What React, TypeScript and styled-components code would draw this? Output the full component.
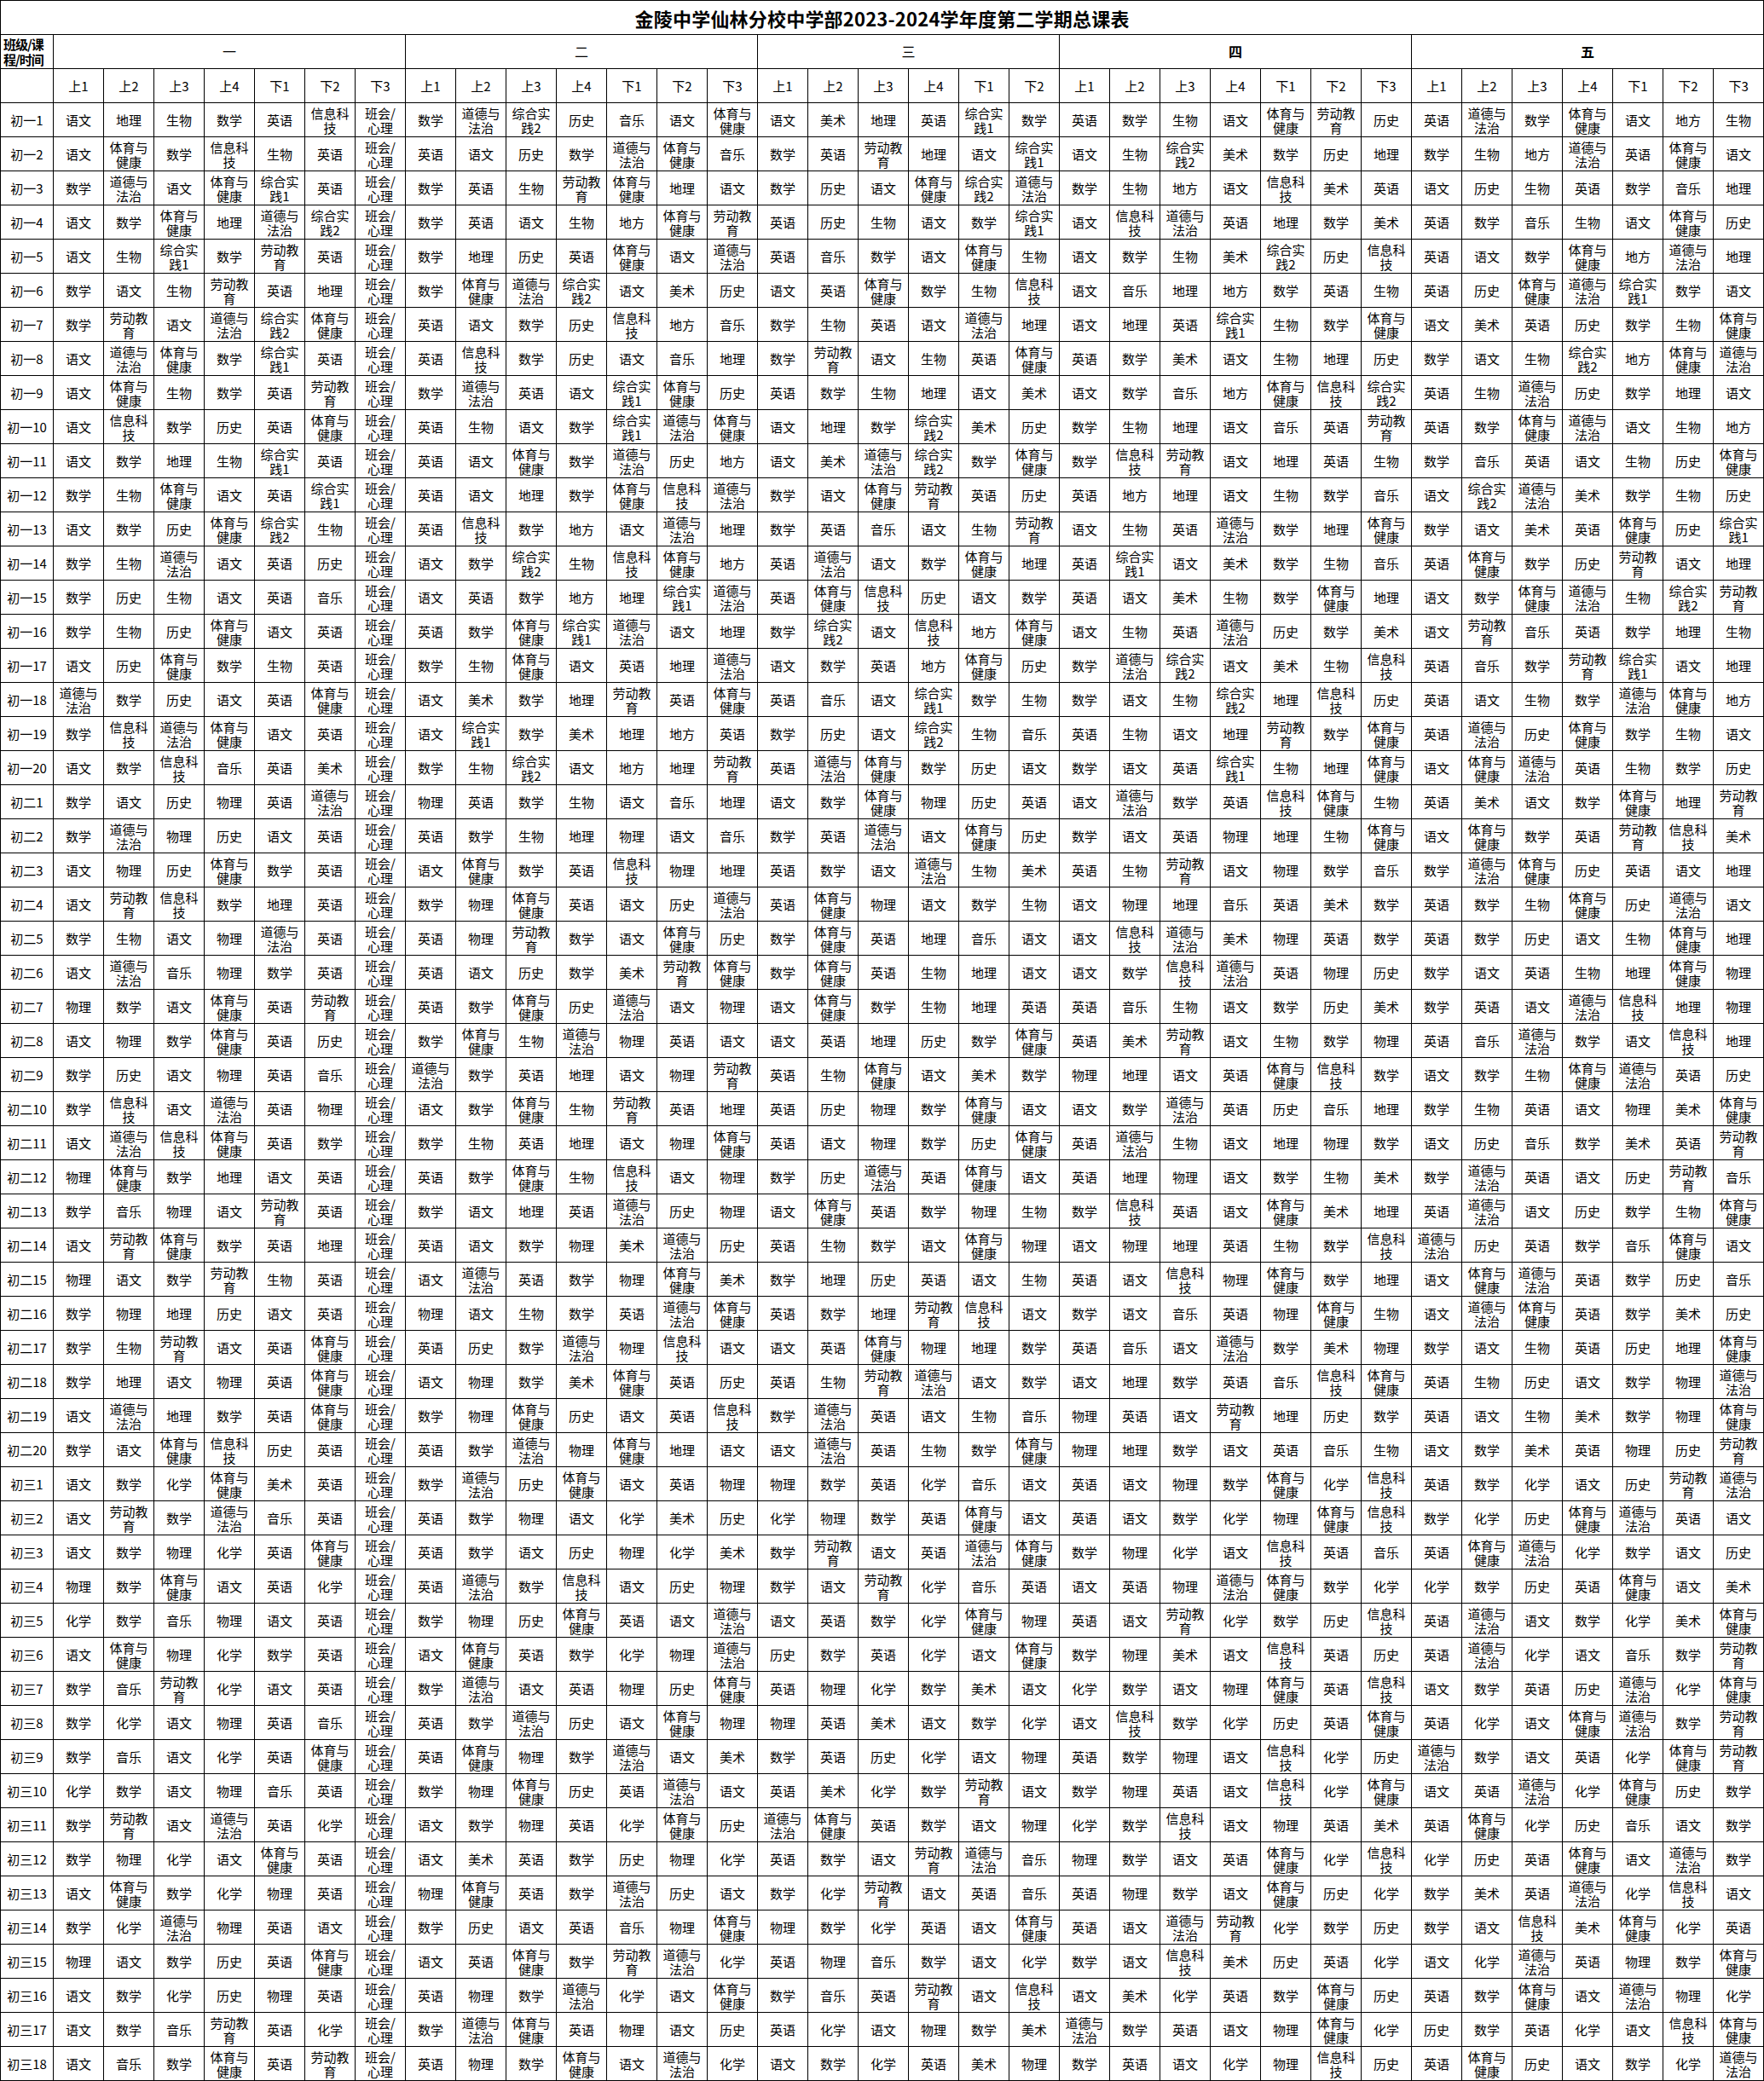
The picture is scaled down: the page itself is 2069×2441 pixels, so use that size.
import React from "react";
import styled, { createGlobalStyle } from "styled-components";

const GlobalStyle = createGlobalStyle`
  html, body {
    margin: 0;
    padding: 0;
    background: #fff;
  }
  body {
    font-family: "Noto Sans CJK SC", "Liberation Sans", sans-serif;
    color: #000;
  }
`;

const AM_PM = ["上1", "上2", "上3", "上4", "下1", "下2", "下3"];

const DAYS = [
  { name: "一", periods: AM_PM, bold: false },
  { name: "二", periods: AM_PM, bold: false },
  { name: "三", periods: AM_PM.slice(0, 6), bold: false },
  { name: "四", periods: AM_PM, bold: true },
  { name: "五", periods: AM_PM, bold: true },
];

// one line per class, day groups split by "|"
const ROWS: [string, string][] = [
  ["初一1", "语文 地理 生物 数学 英语 信息科技 班会/心理 | 数学 道德与法治 综合实践2 历史 音乐 语文 体育与健康 | 语文 美术 地理 英语 综合实践1 数学 | 英语 数学 生物 语文 体育与健康 劳动教育 历史 | 英语 道德与法治 数学 体育与健康 语文 地方 生物"],
  ["初一2", "语文 体育与健康 数学 信息科技 生物 英语 班会/心理 | 英语 语文 历史 数学 道德与法治 体育与健康 音乐 | 数学 英语 劳动教育 地理 语文 综合实践1 | 语文 生物 综合实践2 美术 数学 历史 地理 | 数学 生物 地方 道德与法治 英语 体育与健康 语文"],
  ["初一3", "数学 道德与法治 语文 体育与健康 综合实践1 英语 班会/心理 | 数学 英语 生物 劳动教育 体育与健康 地理 语文 | 数学 历史 语文 体育与健康 综合实践2 道德与法治 | 数学 生物 地方 语文 信息科技 美术 英语 | 语文 历史 生物 英语 数学 音乐 地理"],
  ["初一4", "语文 数学 体育与健康 地理 道德与法治 综合实践2 班会/心理 | 数学 英语 语文 生物 地方 体育与健康 劳动教育 | 英语 历史 生物 语文 数学 综合实践1 | 语文 信息科技 道德与法治 英语 地理 数学 美术 | 英语 数学 音乐 生物 语文 体育与健康 历史"],
  ["初一5", "语文 生物 综合实践1 数学 劳动教育 英语 班会/心理 | 数学 地理 历史 英语 体育与健康 语文 道德与法治 | 英语 音乐 数学 语文 体育与健康 生物 | 语文 数学 生物 美术 综合实践2 历史 信息科技 | 英语 语文 数学 体育与健康 地方 道德与法治 地理"],
  ["初一6", "数学 语文 生物 劳动教育 英语 地理 班会/心理 | 数学 体育与健康 道德与法治 综合实践2 语文 美术 历史 | 语文 英语 体育与健康 数学 生物 信息科技 | 语文 音乐 地理 地方 数学 英语 生物 | 英语 历史 体育与健康 道德与法治 综合实践1 数学 语文"],
  ["初一7", "数学 劳动教育 语文 道德与法治 综合实践2 体育与健康 班会/心理 | 英语 语文 数学 历史 信息科技 地方 音乐 | 数学 生物 英语 语文 道德与法治 地理 | 语文 地理 英语 综合实践1 生物 数学 体育与健康 | 语文 美术 英语 历史 数学 生物 体育与健康"],
  ["初一8", "语文 道德与法治 体育与健康 数学 综合实践1 英语 班会/心理 | 英语 信息科技 数学 历史 语文 音乐 地理 | 数学 劳动教育 语文 生物 英语 体育与健康 | 英语 数学 美术 语文 生物 地理 历史 | 数学 语文 生物 综合实践2 地方 体育与健康 道德与法治"],
  ["初一9", "语文 体育与健康 生物 数学 英语 劳动教育 班会/心理 | 数学 道德与法治 英语 语文 综合实践1 体育与健康 历史 | 英语 数学 生物 地理 语文 美术 | 语文 数学 音乐 地方 体育与健康 信息科技 综合实践2 | 英语 生物 道德与法治 历史 数学 地理 语文"],
  ["初一10", "语文 信息科技 数学 历史 英语 体育与健康 班会/心理 | 英语 生物 语文 数学 综合实践1 道德与法治 体育与健康 | 语文 地理 数学 综合实践2 美术 历史 | 数学 生物 地理 语文 音乐 英语 劳动教育 | 英语 数学 体育与健康 道德与法治 语文 生物 地方"],
  ["初一11", "语文 数学 地理 生物 综合实践1 英语 班会/心理 | 英语 语文 体育与健康 数学 道德与法治 历史 地方 | 语文 美术 道德与法治 综合实践2 数学 体育与健康 | 数学 信息科技 劳动教育 语文 地理 英语 生物 | 数学 音乐 英语 语文 生物 历史 体育与健康"],
  ["初一12", "数学 生物 体育与健康 语文 英语 综合实践1 班会/心理 | 英语 语文 地理 数学 体育与健康 信息科技 道德与法治 | 数学 语文 体育与健康 劳动教育 英语 历史 | 英语 地方 地理 语文 生物 数学 音乐 | 语文 综合实践2 道德与法治 美术 数学 生物 历史"],
  ["初一13", "语文 数学 历史 体育与健康 综合实践2 生物 班会/心理 | 英语 信息科技 数学 地方 语文 道德与法治 地理 | 数学 英语 音乐 语文 生物 劳动教育 | 语文 生物 英语 道德与法治 数学 地理 体育与健康 | 数学 语文 美术 英语 体育与健康 历史 综合实践1"],
  ["初一14", "数学 生物 道德与法治 语文 英语 历史 班会/心理 | 语文 数学 综合实践2 生物 信息科技 体育与健康 地方 | 英语 道德与法治 语文 数学 体育与健康 地理 | 英语 综合实践1 语文 美术 数学 生物 音乐 | 英语 体育与健康 数学 历史 劳动教育 语文 地理"],
  ["初一15", "数学 历史 生物 语文 英语 音乐 班会/心理 | 语文 英语 数学 地方 地理 综合实践1 道德与法治 | 英语 体育与健康 信息科技 历史 语文 数学 | 英语 语文 美术 生物 数学 体育与健康 地理 | 语文 数学 体育与健康 道德与法治 生物 综合实践2 劳动教育"],
  ["初一16", "数学 生物 历史 体育与健康 语文 英语 班会/心理 | 英语 数学 体育与健康 综合实践1 道德与法治 语文 地理 | 数学 综合实践2 语文 信息科技 地方 体育与健康 | 语文 生物 英语 道德与法治 历史 数学 美术 | 语文 劳动教育 音乐 英语 数学 地理 生物"],
  ["初一17", "语文 历史 体育与健康 数学 生物 英语 班会/心理 | 数学 生物 体育与健康 语文 英语 地理 道德与法治 | 语文 数学 英语 地方 体育与健康 历史 | 数学 道德与法治 综合实践2 语文 美术 生物 信息科技 | 英语 音乐 数学 劳动教育 综合实践1 语文 地理"],
  ["初一18", "道德与法治 数学 历史 语文 英语 体育与健康 班会/心理 | 语文 美术 数学 地理 劳动教育 英语 体育与健康 | 英语 音乐 语文 综合实践1 数学 生物 | 数学 语文 生物 综合实践2 地理 信息科技 历史 | 英语 语文 生物 数学 道德与法治 体育与健康 地方"],
  ["初一19", "数学 信息科技 道德与法治 体育与健康 语文 英语 班会/心理 | 语文 综合实践1 数学 美术 地理 地方 英语 | 数学 历史 语文 综合实践2 生物 音乐 | 英语 生物 语文 地理 劳动教育 数学 体育与健康 | 英语 道德与法治 历史 体育与健康 数学 生物 语文"],
  ["初一20", "语文 数学 信息科技 音乐 英语 美术 班会/心理 | 数学 生物 综合实践2 语文 地方 地理 劳动教育 | 英语 道德与法治 体育与健康 数学 历史 语文 | 数学 语文 英语 综合实践1 生物 地理 体育与健康 | 语文 体育与健康 道德与法治 英语 生物 数学 历史"],
  ["初二1", "数学 语文 历史 物理 英语 道德与法治 班会/心理 | 物理 英语 数学 生物 语文 音乐 地理 | 语文 数学 体育与健康 物理 历史 英语 | 语文 道德与法治 数学 英语 信息科技 体育与健康 生物 | 英语 美术 语文 数学 体育与健康 地理 劳动教育"],
  ["初二2", "数学 道德与法治 物理 历史 语文 英语 班会/心理 | 英语 数学 生物 地理 物理 语文 音乐 | 数学 英语 道德与法治 语文 体育与健康 历史 | 数学 语文 英语 物理 地理 生物 体育与健康 | 语文 体育与健康 数学 英语 劳动教育 信息科技 美术"],
  ["初二3", "语文 物理 历史 体育与健康 数学 英语 班会/心理 | 语文 体育与健康 数学 英语 信息科技 物理 地理 | 英语 数学 语文 道德与法治 生物 美术 | 英语 生物 劳动教育 语文 物理 数学 音乐 | 数学 道德与法治 体育与健康 历史 英语 语文 地理"],
  ["初二4", "语文 劳动教育 信息科技 数学 地理 英语 班会/心理 | 数学 物理 体育与健康 英语 语文 历史 道德与法治 | 英语 体育与健康 物理 语文 数学 生物 | 语文 物理 地理 音乐 英语 美术 数学 | 英语 数学 生物 体育与健康 历史 道德与法治 语文"],
  ["初二5", "数学 生物 语文 物理 道德与法治 英语 班会/心理 | 英语 物理 劳动教育 数学 语文 体育与健康 历史 | 数学 体育与健康 英语 地理 音乐 语文 | 语文 信息科技 道德与法治 美术 物理 英语 数学 | 英语 数学 历史 语文 生物 体育与健康 地理"],
  ["初二6", "语文 道德与法治 音乐 物理 数学 英语 班会/心理 | 英语 语文 历史 数学 美术 劳动教育 体育与健康 | 数学 体育与健康 英语 生物 地理 语文 | 语文 数学 信息科技 道德与法治 英语 物理 历史 | 数学 语文 英语 生物 地理 体育与健康 物理"],
  ["初二7", "物理 数学 语文 体育与健康 英语 劳动教育 班会/心理 | 英语 数学 体育与健康 历史 道德与法治 语文 物理 | 语文 体育与健康 数学 生物 地理 英语 | 英语 音乐 生物 语文 数学 历史 美术 | 数学 英语 语文 道德与法治 信息科技 地理 物理"],
  ["初二8", "语文 物理 数学 体育与健康 英语 历史 班会/心理 | 数学 体育与健康 生物 道德与法治 物理 英语 语文 | 语文 英语 地理 历史 数学 体育与健康 | 英语 美术 劳动教育 语文 生物 数学 物理 | 英语 音乐 道德与法治 数学 语文 信息科技 地理"],
  ["初二9", "数学 历史 语文 物理 英语 音乐 班会/心理 | 道德与法治 数学 英语 地理 语文 物理 劳动教育 | 英语 生物 体育与健康 语文 美术 数学 | 物理 地理 语文 英语 体育与健康 信息科技 数学 | 语文 数学 生物 体育与健康 道德与法治 英语 历史"],
  ["初二10", "数学 信息科技 语文 道德与法治 英语 物理 班会/心理 | 语文 数学 体育与健康 生物 劳动教育 英语 地理 | 英语 历史 物理 数学 体育与健康 语文 | 语文 数学 道德与法治 英语 历史 音乐 地理 | 数学 生物 英语 语文 物理 美术 体育与健康"],
  ["初二11", "语文 道德与法治 信息科技 体育与健康 英语 数学 班会/心理 | 数学 生物 英语 地理 语文 物理 体育与健康 | 英语 语文 物理 数学 历史 体育与健康 | 英语 道德与法治 生物 语文 地理 物理 数学 | 语文 历史 音乐 数学 美术 英语 劳动教育"],
  ["初二12", "物理 体育与健康 数学 地理 语文 英语 班会/心理 | 英语 数学 体育与健康 生物 信息科技 语文 物理 | 数学 历史 道德与法治 英语 体育与健康 语文 | 英语 地理 物理 语文 数学 生物 美术 | 数学 道德与法治 英语 语文 历史 劳动教育 音乐"],
  ["初二13", "数学 音乐 物理 语文 劳动教育 英语 班会/心理 | 数学 语文 地理 英语 道德与法治 历史 物理 | 语文 体育与健康 英语 数学 物理 生物 | 数学 信息科技 英语 语文 体育与健康 美术 地理 | 英语 道德与法治 语文 历史 数学 生物 体育与健康"],
  ["初二14", "语文 劳动教育 体育与健康 数学 英语 地理 班会/心理 | 英语 语文 数学 物理 美术 道德与法治 历史 | 英语 生物 数学 语文 体育与健康 物理 | 语文 物理 地理 英语 生物 数学 信息科技 | 道德与法治 历史 英语 数学 音乐 体育与健康 语文"],
  ["初二15", "物理 语文 数学 劳动教育 生物 英语 班会/心理 | 语文 道德与法治 英语 数学 物理 体育与健康 美术 | 数学 地理 历史 英语 语文 生物 | 英语 语文 信息科技 物理 体育与健康 数学 地理 | 语文 体育与健康 道德与法治 英语 数学 历史 音乐"],
  ["初二16", "数学 物理 地理 历史 语文 英语 班会/心理 | 物理 语文 生物 数学 英语 道德与法治 体育与健康 | 英语 数学 地理 劳动教育 信息科技 语文 | 数学 语文 音乐 英语 物理 体育与健康 生物 | 语文 道德与法治 体育与健康 英语 数学 美术 历史"],
  ["初二17", "数学 生物 劳动教育 语文 英语 体育与健康 班会/心理 | 英语 历史 数学 道德与法治 物理 信息科技 语文 | 语文 英语 体育与健康 物理 地理 数学 | 英语 音乐 语文 道德与法治 数学 美术 物理 | 数学 语文 生物 英语 历史 地理 体育与健康"],
  ["初二18", "数学 地理 语文 物理 英语 体育与健康 班会/心理 | 语文 物理 数学 美术 体育与健康 英语 历史 | 英语 生物 劳动教育 道德与法治 语文 数学 | 语文 地理 数学 英语 音乐 信息科技 体育与健康 | 英语 生物 历史 语文 数学 物理 道德与法治"],
  ["初二19", "语文 道德与法治 地理 数学 英语 体育与健康 班会/心理 | 数学 物理 体育与健康 历史 语文 英语 信息科技 | 数学 道德与法治 英语 语文 生物 音乐 | 物理 英语 语文 劳动教育 地理 历史 数学 | 英语 语文 生物 美术 数学 物理 体育与健康"],
  ["初二20", "数学 语文 体育与健康 信息科技 历史 英语 班会/心理 | 英语 数学 道德与法治 物理 体育与健康 地理 语文 | 语文 道德与法治 英语 生物 数学 体育与健康 | 物理 地理 数学 语文 英语 音乐 生物 | 语文 数学 美术 英语 物理 历史 劳动教育"],
  ["初三1", "语文 数学 化学 体育与健康 美术 英语 班会/心理 | 数学 道德与法治 历史 体育与健康 语文 英语 物理 | 物理 数学 英语 化学 音乐 语文 | 英语 语文 物理 数学 体育与健康 化学 信息科技 | 英语 数学 化学 语文 历史 劳动教育 道德与法治"],
  ["初三2", "语文 劳动教育 数学 道德与法治 音乐 英语 班会/心理 | 英语 数学 物理 语文 化学 美术 历史 | 化学 物理 数学 英语 体育与健康 语文 | 英语 语文 数学 化学 物理 体育与健康 信息科技 | 数学 化学 历史 体育与健康 道德与法治 英语 语文"],
  ["初三3", "语文 数学 物理 化学 英语 体育与健康 班会/心理 | 英语 数学 语文 历史 物理 化学 美术 | 数学 劳动教育 语文 英语 道德与法治 体育与健康 | 数学 物理 化学 语文 信息科技 英语 音乐 | 英语 体育与健康 道德与法治 化学 数学 语文 历史"],
  ["初三4", "物理 数学 体育与健康 语文 英语 化学 班会/心理 | 英语 道德与法治 数学 信息科技 语文 历史 物理 | 数学 语文 劳动教育 化学 音乐 英语 | 语文 英语 物理 道德与法治 体育与健康 数学 化学 | 化学 数学 历史 英语 体育与健康 语文 美术"],
  ["初三5", "化学 数学 音乐 物理 语文 英语 班会/心理 | 数学 物理 历史 体育与健康 英语 语文 道德与法治 | 语文 英语 数学 化学 体育与健康 物理 | 英语 语文 劳动教育 化学 数学 历史 信息科技 | 英语 道德与法治 语文 数学 化学 美术 体育与健康"],
  ["初三6", "语文 体育与健康 物理 化学 数学 英语 班会/心理 | 语文 体育与健康 英语 数学 化学 物理 道德与法治 | 历史 数学 英语 化学 语文 体育与健康 | 数学 物理 美术 语文 信息科技 英语 历史 | 英语 道德与法治 化学 语文 音乐 数学 劳动教育"],
  ["初三7", "数学 音乐 劳动教育 化学 语文 英语 班会/心理 | 数学 道德与法治 语文 英语 物理 历史 体育与健康 | 英语 物理 化学 数学 美术 语文 | 化学 数学 语文 物理 体育与健康 英语 信息科技 | 语文 数学 英语 历史 道德与法治 化学 体育与健康"],
  ["初三8", "数学 化学 语文 物理 英语 音乐 班会/心理 | 英语 数学 道德与法治 历史 语文 体育与健康 物理 | 物理 英语 美术 语文 数学 化学 | 语文 信息科技 数学 化学 历史 英语 体育与健康 | 英语 化学 语文 体育与健康 道德与法治 数学 劳动教育"],
  ["初三9", "数学 音乐 语文 化学 英语 体育与健康 班会/心理 | 英语 体育与健康 物理 数学 道德与法治 语文 美术 | 数学 英语 历史 化学 语文 物理 | 英语 数学 物理 语文 信息科技 化学 历史 | 道德与法治 数学 语文 英语 化学 体育与健康 劳动教育"],
  ["初三10", "化学 数学 语文 物理 音乐 英语 班会/心理 | 数学 物理 体育与健康 历史 英语 道德与法治 语文 | 英语 美术 化学 数学 劳动教育 语文 | 数学 物理 英语 语文 信息科技 化学 体育与健康 | 语文 英语 道德与法治 化学 体育与健康 历史 数学"],
  ["初三11", "数学 劳动教育 语文 道德与法治 英语 化学 班会/心理 | 语文 数学 物理 英语 化学 体育与健康 历史 | 道德与法治 体育与健康 英语 数学 语文 物理 | 化学 数学 信息科技 语文 物理 英语 美术 | 英语 体育与健康 化学 历史 音乐 语文 数学"],
  ["初三12", "数学 物理 化学 语文 体育与健康 英语 班会/心理 | 语文 美术 英语 数学 历史 物理 化学 | 英语 数学 语文 劳动教育 道德与法治 音乐 | 物理 数学 语文 英语 体育与健康 化学 信息科技 | 化学 历史 英语 体育与健康 语文 道德与法治 数学"],
  ["初三13", "语文 体育与健康 数学 化学 物理 英语 班会/心理 | 物理 体育与健康 英语 数学 道德与法治 历史 语文 | 数学 化学 劳动教育 语文 英语 音乐 | 英语 物理 数学 语文 体育与健康 历史 化学 | 数学 美术 英语 道德与法治 化学 信息科技 语文"],
  ["初三14", "数学 化学 道德与法治 物理 英语 语文 班会/心理 | 数学 历史 语文 英语 音乐 物理 体育与健康 | 物理 数学 化学 英语 语文 体育与健康 | 英语 语文 道德与法治 劳动教育 化学 数学 历史 | 数学 语文 信息科技 美术 体育与健康 化学 英语"],
  ["初三15", "物理 语文 数学 历史 英语 体育与健康 班会/心理 | 语文 英语 体育与健康 数学 劳动教育 道德与法治 化学 | 英语 物理 音乐 数学 语文 化学 | 数学 语文 信息科技 美术 历史 英语 化学 | 语文 化学 道德与法治 英语 物理 数学 体育与健康"],
  ["初三16", "语文 数学 化学 历史 物理 英语 班会/心理 | 英语 物理 数学 道德与法治 化学 语文 体育与健康 | 数学 音乐 英语 劳动教育 语文 信息科技 | 语文 美术 化学 英语 数学 体育与健康 历史 | 英语 数学 体育与健康 语文 道德与法治 物理 化学"],
  ["初三17", "语文 数学 音乐 劳动教育 英语 化学 班会/心理 | 数学 道德与法治 体育与健康 英语 物理 语文 历史 | 英语 化学 语文 物理 数学 美术 | 道德与法治 数学 英语 语文 物理 体育与健康 化学 | 历史 数学 英语 化学 语文 信息科技 体育与健康"],
  ["初三18", "语文 音乐 数学 体育与健康 英语 劳动教育 班会/心理 | 英语 物理 数学 体育与健康 语文 道德与法治 化学 | 语文 数学 化学 英语 美术 物理 | 数学 英语 语文 化学 物理 信息科技 历史 | 英语 体育与健康 历史 语文 数学 化学 道德与法治"],
];

const COLUMN_COUNT = DAYS.reduce((n, d) => n + d.periods.length, 0);

// cells wrap after three characters; "班会/心理" breaks after the slash
function splitLines(subject: string): string[] {
  const slash = subject.indexOf("/");
  if (slash >= 0) return [subject.slice(0, slash + 1), subject.slice(slash + 1)];
  if (subject.length > 3) return [subject.slice(0, 3), subject.slice(3)];
  return [subject];
}

export default function App() {
  return (
    <>
      <GlobalStyle />
      <Sheet>
        <colgroup>
          <LabelCol />
          {Array.from({ length: COLUMN_COUNT }, (_, i) => (
            <DataCol key={i} />
          ))}
        </colgroup>
        <tbody>
          <Row>
            <TitleCell colSpan={COLUMN_COUNT + 1}>
              金陵中学仙林分校中学部2023-2024学年度第二学期总课表
            </TitleCell>
          </Row>
          <Row>
            <CornerCell>
              班级/课
              <br />
              程/时间
            </CornerCell>
            {DAYS.map((d) => (
              <DayCell key={d.name} colSpan={d.periods.length} $bold={d.bold}>
                {d.name}
              </DayCell>
            ))}
          </Row>
          <Row>
            <Cell />
            {DAYS.map((d) =>
              d.periods.map((p) => <Cell key={d.name + p}>{p}</Cell>)
            )}
          </Row>
          {ROWS.map(([klass, line]) => {
            const subjects = line.split(/[\s|]+/).filter(Boolean);
            return (
              <Row key={klass}>
                <Cell>{klass}</Cell>
                {subjects.map((s, i) => (
                  <Cell key={i}>
                    {splitLines(s).map((part, j) => (
                      <Line key={j}>{part}</Line>
                    ))}
                  </Cell>
                ))}
              </Row>
            );
          })}
        </tbody>
      </Sheet>
    </>
  );
}

const Sheet = styled.table`
  table-layout: fixed;
  border-collapse: collapse;
  width: 2068px;
  background: #fff;
`;

const LabelCol = styled.col`
  width: 62px;
`;

const DataCol = styled.col`
  width: 59px;
`;

const Row = styled.tr`
  height: 40px;
`;

const Cell = styled.td`
  border: 1px solid #000;
  padding: 0;
  text-align: center;
  vertical-align: middle;
  font-size: 15px;
  line-height: 17px;
  white-space: nowrap;
  overflow: hidden;
`;

const Line = styled.span`
  display: block;
`;

const TitleCell = styled(Cell)`
  font-size: 22px;
  font-weight: 700;
  line-height: 26px;
  letter-spacing: 0.2px;
`;

const CornerCell = styled(Cell)`
  text-align: left;
  padding-left: 3px;
  font-size: 15px;
  font-weight: 700;
  line-height: 18px;
  letter-spacing: -1px;
  overflow: visible;
`;

const DayCell = styled(Cell)<{ $bold: boolean }>`
  font-size: 16px;
  font-weight: ${(p) => (p.$bold ? 700 : 400)};
`;
